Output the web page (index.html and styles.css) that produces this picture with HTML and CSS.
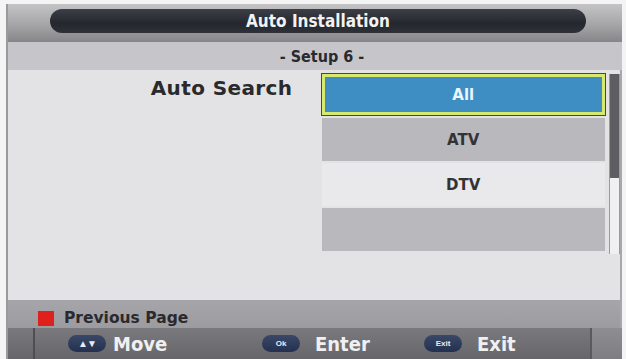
FILE: index.html
```html
<!DOCTYPE html>
<html>
<head>
<meta charset="utf-8">
<link rel="stylesheet" href="styles.css">
</head>
<body>
<div class="screen">
  <div class="header">
    <div class="title-pill">Auto Installation</div>
  </div>
  <div class="subtitle">- Setup 6 -</div>
  <div class="content">
    <div class="label">Auto Search</div>
    <div class="list">
      <div class="item selected">All</div>
      <div class="item dark">ATV</div>
      <div class="item light">DTV</div>
      <div class="item dark"></div>
    </div>
    <div class="scrollbar"><div class="thumb"></div></div>
  </div>
  <div class="hint">
    <span class="red-key"></span>
    <span class="hint-text">Previous Page</span>
  </div>
  <div class="keys">
    <div class="edge-left"></div>
    <div class="keys-main">
      <div class="key key-move"><span class="pill arrows">▲▼</span><span class="key-text">Move</span></div>
      <div class="key key-enter"><span class="pill">Ok</span><span class="key-text">Enter</span></div>
      <div class="key key-exit"><span class="pill">Exit</span><span class="key-text">Exit</span></div>
    </div>
    <div class="edge-right"></div>
  </div>
</div>
</body>
</html>
```
FILE: styles.css
```css
html, body {
  margin: 0;
  padding: 0;
  background: #f4f4f4;
}
body {
  width: 626px;
  height: 359px;
  overflow: hidden;
}
.screen {
  margin: 4px 4px 0 6px;
  height: 355px;
  display: flex;
  flex-direction: column;
  border-left: 2px solid #9a9a9e;
}
.header {
  height: 38px;
  background: linear-gradient(#c4c4c6, #a8a8aa 50%, #86868a);
  display: flex;
  align-items: center;
  padding: 0 36px 0 42px;
}
.title-pill {
  flex: 1;
  height: 24px;
  margin-top: -4px;
  border-radius: 12px;
  background: linear-gradient(#3c3f46, #24272d 60%, #2e3138);
  color: #f2f2f2;
  font-family: "DejaVu Sans Condensed", "DejaVu Sans", sans-serif;
  font-stretch: condensed;
  font-weight: bold;
  font-size: 17px;
  display: flex;
  align-items: center;
  justify-content: center;
}
.subtitle {
  height: 28px;
  background: #c6c6ca;
  color: #2a2a2c;
  font-family: "DejaVu Sans Condensed", "DejaVu Sans", sans-serif;
  font-stretch: condensed;
  font-weight: bold;
  font-size: 16px;
  display: flex;
  align-items: center;
  justify-content: center;
  padding-left: 14px;
}
.content {
  height: 230px;
  background: #e3e3e5;
  display: flex;
  align-items: flex-start;
  border-right: 2px solid #a8a8ac;
}
.label {
  width: 285px;
  text-align: right;
  padding-top: 6px;
  font-family: "DejaVu Sans", sans-serif;
  font-weight: bold;
  font-size: 20px;
  letter-spacing: 0.4px;
  color: #2a2a2c;
}
.list {
  margin-left: 29px;
  margin-top: 4px;
  width: 284px;
  display: flex;
  flex-direction: column;
  gap: 2px;
}
.item {
  height: 43px;
  display: flex;
  align-items: center;
  justify-content: center;
  font-family: "DejaVu Sans", sans-serif;
  font-weight: bold;
  font-size: 15px;
  color: #333336;
  box-sizing: border-box;
}
.item.dark { background: #b9b9bd; }
.item.light { background: #e9e9eb; }
.item.selected {
  background: #3f8ec3;
  color: #eaf6fc;
  border: 3px solid #d6e86e;
  outline: 1px solid #4a4a30;
  height: 41px;
  margin-bottom: 1px;
}
.scrollbar {
  margin-left: 4px;
  margin-top: 4px;
  width: 9px;
  height: 180px;
  background: #f0f0f2;
  border-left: 1px solid #9a9a9e;
  border-right: 1px solid #9a9a9e;
}
.thumb {
  height: 104px;
  background: #5e5e62;
}
.hint {
  height: 28px;
  background: linear-gradient(#a6a6aa, #9c9ca0);
  display: flex;
  align-items: center;
  padding-left: 30px;
  gap: 10px;
  border-right: 2px solid #a8a8ac;
}
.red-key {
  width: 16px;
  height: 15px;
  background: #e0201c;
  margin-top: 8px;
}
.hint-text {
  font-family: "DejaVu Sans", sans-serif;
  font-weight: bold;
  font-size: 15.5px;
  color: #2a2a2e;
  margin-top: 8px;
}
.keys {
  flex: 1;
  display: flex;
  background: linear-gradient(#7a7a7e, #66666a);
}
.edge-left {
  width: 25px;
  border-right: 2px solid #4e4e52;
}
.edge-right {
  width: 30px;
  background: linear-gradient(#8e8e92, #7e7e82);
  border-left: 2px solid #5a5a5e;
}
.keys-main {
  flex: 1;
  display: flex;
  align-items: center;
  padding-left: 33px;
}
.key {
  display: flex;
  align-items: center;
  gap: 15px;
}
.key-move { width: 194px; gap: 7px; }
.key-enter { width: 162px; }
.pill {
  width: 38px;
  height: 17px;
  border-radius: 9px;
  background: linear-gradient(#3a4868, #243050);
  color: #e8ecf4;
  font-family: "Liberation Sans", Arial, sans-serif;
  font-weight: bold;
  font-size: 8px;
  display: flex;
  align-items: center;
  justify-content: center;
}
.pill.arrows {
  font-size: 10px;
  letter-spacing: -1px;
}
.key-text {
  font-family: "DejaVu Sans Condensed", "DejaVu Sans", sans-serif;
  font-stretch: condensed;
  font-weight: bold;
  font-size: 20px;
  color: #f0f0f2;
}
```
